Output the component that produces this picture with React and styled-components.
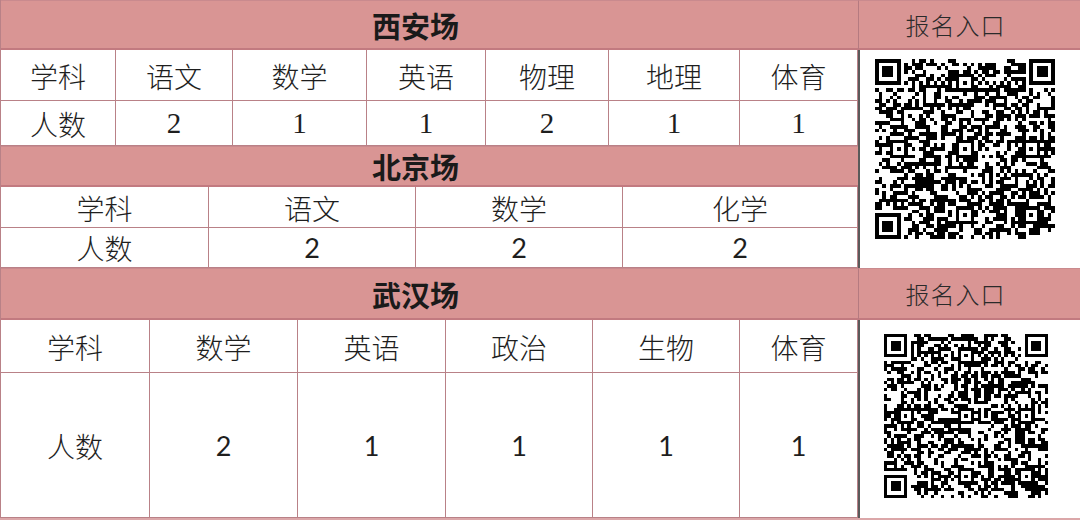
import React from "react";
import styled, { createGlobalStyle } from "styled-components";

const Global = createGlobalStyle`
  html, body { margin: 0; padding: 0; background: #fff; }
  body { width: 1080px; height: 520px; overflow: hidden; }
`;

const PINK = "#d99594";
const LINE = "#b98187";
const CJK = `"Noto Sans CJK SC", "Noto Sans", sans-serif`;

const Page = styled.div`
  display: grid;
  grid-template-columns: 858px 222px;
  width: 1080px;
  height: 520px;
  box-sizing: border-box;
  border-bottom: 2px solid #dba7a9;
`;

const LeftCol = styled.div`
  display: flex;
  flex-direction: column;
  border-left: 1px solid ${LINE};
  box-sizing: border-box;
`;

const RightCol = styled.div`
  display: flex;
  flex-direction: column;
`;

const Table = styled.div`
  display: grid;
  grid-template-columns: ${(p) => p.$cols};
  grid-template-rows: ${(p) => p.$rows};
  flex: ${(p) => (p.$grow ? "1" : "none")};
`;

const Header = styled.div`
  grid-column: 1 / -1;
  background: ${PINK};
  display: flex;
  align-items: center;
  justify-content: center;
  padding-right: 28px;
  font-family: ${CJK};
  font-weight: 700;
  font-size: 29px;
  color: #1a1a1a;
  border-top: 1px solid #c98a8e;
  border-bottom: 2px solid #c27a80;
  box-sizing: border-box;
`;

const Cell = styled.div`
  display: flex;
  align-items: center;
  justify-content: center;
  background: #fff;
  border-right: 1px solid ${LINE};
  border-bottom: 1px solid ${LINE};
  box-sizing: border-box;
  font-family: ${(p) =>
    p.$num === "serif"
      ? `"Liberation Serif", serif`
      : p.$num === "sans"
      ? `Lato, "Open Sans", sans-serif`
      : CJK};
  font-size: ${(p) => (p.$num === "serif" ? "29px" : p.$num ? "27px" : "28px")};
  font-weight: ${(p) => (p.$num ? 400 : 300)};
  color: #1e1e1e;
  padding-top: ${(p) => (p.$num ? "0" : "1px")};
`;

const RegHeader = styled.div`
  height: ${(p) => p.$h}px;
  background: ${PINK};
  display: flex;
  align-items: center;
  justify-content: center;
  padding-right: 28px;
  font-family: ${CJK};
  font-size: 24px;
  font-weight: 300;
  color: #2a2a2a;
  letter-spacing: 1px;
  border-left: 1px solid #b57a80;
  border-top: 1px solid #c98a8e;
  border-bottom: 2px solid #c27a80;
  box-sizing: border-box;
`;

const QrCell = styled.div`
  height: ${(p) => p.$h}px;
  background: #fff;
  display: flex;
  justify-content: flex-start;
  align-items: flex-start;
  padding-top: ${(p) => p.$pt}px;
  padding-left: ${(p) => p.$pl}px;
  border-left: 2px solid #5a5a5a;
  box-sizing: border-box;
`;

function mulberry32(a) {
  return function () {
    a |= 0;
    a = (a + 0x6d2b79f5) | 0;
    let t = Math.imul(a ^ (a >>> 15), 1 | a);
    t = (t + Math.imul(t ^ (t >>> 7), 61 | t)) ^ t;
    return ((t ^ (t >>> 14)) >>> 0) / 4294967296;
  };
}

function buildQr(seed, n) {
  const rnd = mulberry32(seed);
  const m = Array.from({ length: n }, () => Array(n).fill(null));
  const finder = (r0, c0) => {
    for (let r = -1; r <= 7; r++)
      for (let c = -1; c <= 7; c++) {
        const rr = r0 + r, cc = c0 + c;
        if (rr < 0 || cc < 0 || rr >= n || cc >= n) continue;
        let dark = false;
        if (r >= 0 && r <= 6 && c >= 0 && c <= 6) {
          dark = r === 0 || r === 6 || c === 0 || c === 6 || (r >= 2 && r <= 4 && c >= 2 && c <= 4);
        }
        m[rr][cc] = dark;
      }
  };
  finder(0, 0);
  finder(0, n - 7);
  finder(n - 7, 0);
  for (let i = 8; i < n - 8; i++) {
    m[6][i] = i % 2 === 0;
    m[i][6] = i % 2 === 0;
  }
  const pos = [6, Math.round((n - 1) / 2), n - 7];
  pos.forEach((r) =>
    pos.forEach((c) => {
      if ((r === 6 && c === 6) || (r === 6 && c === n - 7) || (r === n - 7 && c === 6)) return;
      for (let dr = -2; dr <= 2; dr++)
        for (let dc = -2; dc <= 2; dc++) {
          m[r + dr][c + dc] = Math.max(Math.abs(dr), Math.abs(dc)) !== 1;
        }
    })
  );
  for (let r = 0; r < n; r++)
    for (let c = 0; c < n; c++) if (m[r][c] === null) m[r][c] = rnd() < 0.52;
  let d = "";
  for (let r = 0; r < n; r++)
    for (let c = 0; c < n; c++) if (m[r][c]) d += `M${c} ${r}h1v1h-1z`;
  return d;
}

function QrCode({ seed, size }) {
  const n = 49;
  const d = React.useMemo(() => buildQr(seed, n), [seed]);
  return (
    <svg width={size} height={size} viewBox={`0 0 ${n} ${n}`} shapeRendering="crispEdges">
      <rect width={n} height={n} fill="#fff" />
      <path d={d} fill="#000" />
    </svg>
  );
}

const sections = [
  {
    title: "西安场",
    cols: "115px 117px 134px 119px 123px 131px 118px",
    rows: "50px 51px 45px",
    subjects: ["学科", "语文", "数学", "英语", "物理", "地理", "体育"],
    counts: ["人数", "2", "1", "1", "2", "1", "1"],
    num: "serif",
  },
  {
    title: "北京场",
    cols: "208px 207px 207px 235px",
    rows: "41px 41px 40px",
    subjects: ["学科", "语文", "数学", "化学"],
    counts: ["人数", "2", "2", "2"],
    num: "sans",
  },
  {
    title: "武汉场",
    cols: "149px 148px 148px 147px 147px 118px",
    rows: "52px 53px 1fr",
    subjects: ["学科", "数学", "英语", "政治", "生物", "体育"],
    counts: ["人数", "2", "1", "1", "1", "1"],
    num: "sans",
    grow: true,
  },
];

export default function App() {
  return (
    <>
      <Global />
      <Page>
        <LeftCol>
          {sections.map((s) => (
            <Table key={s.title} $cols={s.cols} $rows={s.rows} $grow={s.grow}>
              <Header>{s.title}</Header>
              {s.subjects.map((t, i) => (
                <Cell key={"s" + i}>{t}</Cell>
              ))}
              {s.counts.map((t, i) => (
                <Cell key={"c" + i} $num={i === 0 ? undefined : s.num}>
                  {t}
                </Cell>
              ))}
            </Table>
          ))}
        </LeftCol>
        <RightCol>
          <RegHeader $h={50}>报名入口</RegHeader>
          <QrCell $h={218} $pt={9} $pl={15}>
            <QrCode seed={20240517} size={180} />
          </QrCell>
          <RegHeader $h={52}>报名入口</RegHeader>
          <QrCell $h={198} $pt={14} $pl={24}>
            <QrCode seed={987321} size={164} />
          </QrCell>
        </RightCol>
      </Page>
    </>
  );
}
